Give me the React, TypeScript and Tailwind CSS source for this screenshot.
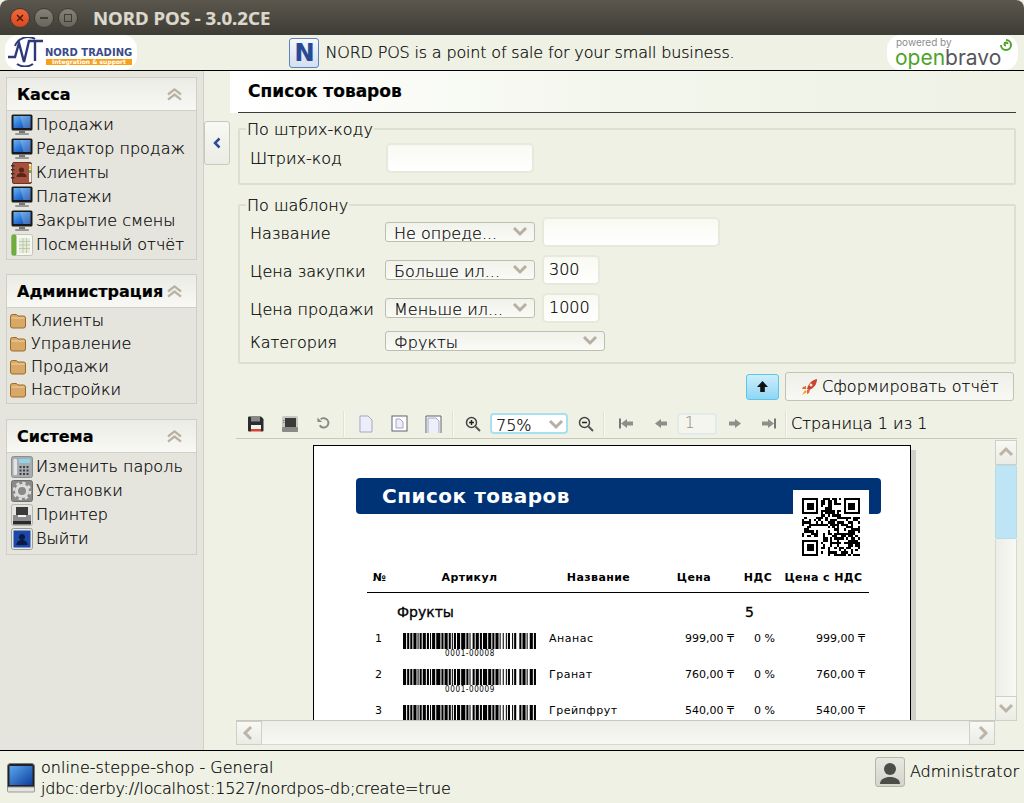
import type { ReactNode } from 'react';

const FONT = "font-['DejaVu_Sans',sans-serif]";

function Chevron({ dir = 'down', className = '' }: { dir?: 'up' | 'down' | 'left' | 'right'; className?: string }) {
  const points = {
    down: '2,4 8,10 14,4',
    up: '2,10 8,4 14,10',
    left: '10,2 4,8 10,14',
    right: '6,2 12,8 6,14',
  }[dir];
  return (
    <svg viewBox="0 0 16 16" className={className} fill="none">
      <polyline points={points} stroke="currentColor" strokeWidth="3" />
    </svg>
  );
}

function DoubleUp() {
  return (
    <svg viewBox="0 0 16 14" className="w-[15px] h-[13px] text-[#b9b2a3]" fill="none">
      <polyline points="1,7 8,1.5 15,7" stroke="currentColor" strokeWidth="2.4" />
      <polyline points="1,12.5 8,7 15,12.5" stroke="currentColor" strokeWidth="2.4" />
    </svg>
  );
}

function MonitorIcon() {
  return (
    <svg viewBox="0 0 22 22" className="w-[22px] h-[22px]">
      <defs>
        <linearGradient id="scr" x1="0" y1="0" x2="1" y2="1">
          <stop offset="0" stopColor="#6fb4ee" />
          <stop offset="0.5" stopColor="#2a76d8" />
          <stop offset="1" stopColor="#0d3f9c" />
        </linearGradient>
      </defs>
      <rect x="0.5" y="0.5" width="21" height="16" rx="1.5" fill="#1a1a1a" />
      <rect x="2.5" y="2" width="17" height="12" fill="url(#scr)" />
      <path d="M9 2h10.5v12h-7z" fill="#fff" opacity="0.22" />
      <rect x="8" y="16.5" width="6" height="2.5" fill="#777" />
      <rect x="4" y="19" width="14" height="2" rx="1" fill="#999" />
    </svg>
  );
}

function BookIcon() {
  return (
    <svg viewBox="0 0 22 22" className="w-[22px] h-[22px]">
      <rect x="1.5" y="0.5" width="19" height="21" rx="1.5" fill="#a4513d" stroke="#6f3324" />
      <rect x="18" y="2" width="2.5" height="18" fill="#eee" />
      <rect x="18" y="4" width="2.5" height="3" fill="#e3c23a" />
      <rect x="18" y="8" width="2.5" height="3" fill="#68b04a" />
      <rect x="0" y="3" width="3.5" height="1.5" fill="#333" />
      <rect x="0" y="7" width="3.5" height="1.5" fill="#333" />
      <rect x="0" y="11" width="3.5" height="1.5" fill="#333" />
      <rect x="0" y="15" width="3.5" height="1.5" fill="#333" />
      <circle cx="10.5" cy="8" r="2.6" fill="#5a2418" />
      <path d="M5.5 15c0-3 2.5-4 5-4s5 1 5 4z" fill="#5a2418" />
    </svg>
  );
}

function SheetIcon() {
  return (
    <svg viewBox="0 0 22 22" className="w-[22px] h-[22px]">
      <rect x="0.5" y="0.5" width="21" height="21" rx="2" fill="#f6f6f2" stroke="#c4c4bc" />
      <rect x="0.5" y="0.5" width="5" height="21" rx="2" fill="#6fae3c" />
      <path d="M8 4h11v15H8z" fill="#e2efd2" />
      <path d="M8 7.5h11M8 11h11M8 14.5h11M12 4v15M15.5 4v15" stroke="#bcbcb0" strokeWidth="0.8" />
    </svg>
  );
}

function FolderIcon() {
  return (
    <svg viewBox="0 0 16 16" className="w-[16px] h-[16px]">
      <path d="M.5 3.5q0-2 2-2h4l1.5 1.5h5.5q2 0 2 2v8q0 2-2 2h-11q-2 0-2-2z" fill="#d8a866" stroke="#9a6a2a" />
      <path d="M1.5 5h13" stroke="#f0d4a4" />
    </svg>
  );
}

function CalcIcon() {
  return (
    <svg viewBox="0 0 22 22" className="w-[22px] h-[22px]">
      <rect x="0.5" y="0.5" width="21" height="21" rx="2" fill="#a9adb1" stroke="#8b8e90" />
      <rect x="8" y="3" width="11" height="4" fill="#8fd4ea" />
      <rect x="2.5" y="3" width="3.5" height="16" rx="1" fill="#e2e4e6" />
      <path d="M8.5 10h2v2h-2zM12 10h2v2h-2zM15.500 10h2v2h-2zM8.500 13.500h2v2h-2zM12 13.500h2v2h-2zM15.500 13.500h2v2h-2zM8.500 17h2v2h-2zM12 17h2v2h-2zM15.500 17h2v2h-2z" fill="#3d4043" />
    </svg>
  );
}

function GearIcon() {
  return (
    <svg viewBox="0 0 22 22" className="w-[22px] h-[22px]">
      <rect x="0.5" y="0.5" width="21" height="21" rx="2" fill="#8a8a88" stroke="#6e6e6c" />
      <circle cx="11" cy="11" r="5.500" fill="none" stroke="#ddd" strokeWidth="3" />
      <circle cx="11" cy="11" r="8" fill="none" stroke="#ddd" strokeWidth="2.500" strokeDasharray="3.300 3" />
    </svg>
  );
}

function PrinterIcon() {
  return (
    <svg viewBox="0 0 22 22" className="w-[22px] h-[22px]">
      <rect x="0.5" y="0.5" width="21" height="21" rx="2" fill="#e4e4e0" stroke="#b5b5b0" />
      <rect x="5" y="3" width="12" height="8" fill="#3a3a3a" />
      <rect x="2" y="11" width="18" height="6" fill="#8a8b8c" />
      <rect x="2" y="17" width="18" height="3.500" fill="#2a2a2a" />
      <rect x="7" y="11" width="8" height="2" fill="#f4f4f4" />
    </svg>
  );
}

function ExitIcon() {
  return (
    <svg viewBox="0 0 22 22" className="w-[22px] h-[22px]">
      <rect x="0.5" y="0.5" width="21" height="21" rx="2" fill="#e8e8e4" stroke="#9a9a96" />
      <rect x="2.500" y="2.500" width="17" height="17" fill="#1d48a8" />
      <circle cx="11" cy="9" r="3" fill="#0a1c44" />
      <path d="M5.500 17c0-3.500 2.500-5 5.500-5s5.500 1.500 5.500 5z" fill="#0a1c44" />
    </svg>
  );
}

function SideRow({ icon, text, h, gap }: { icon: ReactNode; text: string; h: string; gap: string }) {
  return (
    <div className={`flex items-center ${h}`}>
      <span className={`shrink-0 flex items-center ${gap}`}>{icon}</span>
      <span className="text-[16px] text-black whitespace-nowrap">{text}</span>
    </div>
  );
}

function SideSection({ title, children, className = '' }: { title: string; children: ReactNode; className?: string }) {
  return (
    <section className={`mx-[6px] border border-[#cfcfc6] bg-[#e5e5de] ${className}`}>
      <div className="h-[33px] flex items-center justify-between pt-[1px] pl-[10px] pr-[14px] bg-gradient-to-b from-[#ecece6] to-[#f8f8f4] border-b border-[#cfcfc6]">
        <span className="text-[16px] font-bold text-black">{title}</span>
        <DoubleUp />
      </div>
      <div className="pl-[4px]">{children}</div>
    </section>
  );
}

function Sidebar() {
  const rowH = 'h-[24px]';
  const big = 'w-[25px]';
  return (
    <aside className="w-[204px] shrink-0 bg-[#e5e5de] border-r border-[#d0d0c6] pt-[6px]">
      <SideSection title="Касса">
        <div className="py-[2px]">
          <SideRow icon={<MonitorIcon />} text="Продажи" h={rowH} gap={big} />
          <SideRow icon={<MonitorIcon />} text="Редактор продаж" h={rowH} gap={big} />
          <SideRow icon={<BookIcon />} text="Клиенты" h={rowH} gap={big} />
          <SideRow icon={<MonitorIcon />} text="Платежи" h={rowH} gap={big} />
          <SideRow icon={<MonitorIcon />} text="Закрытие смены" h={rowH} gap={big} />
          <SideRow icon={<SheetIcon />} text="Посменный отчёт" h={rowH} gap={big} />
        </div>
      </SideSection>
      <SideSection title="Администрация" className="mt-[14px]">
        <div className="pt-[1px] pb-[2px] -ml-[1px]">
          <SideRow icon={<FolderIcon />} text="Клиенты" h="h-[23px]" gap="w-[21px]" />
          <SideRow icon={<FolderIcon />} text="Управление" h="h-[23px]" gap="w-[21px]" />
          <SideRow icon={<FolderIcon />} text="Продажи" h="h-[23px]" gap="w-[21px]" />
          <SideRow icon={<FolderIcon />} text="Настройки" h="h-[23px]" gap="w-[21px]" />
        </div>
      </SideSection>
      <SideSection title="Система" className="mt-[15px]">
        <div className="pt-[2px] pb-[3px]">
          <SideRow icon={<CalcIcon />} text="Изменить пароль" h={rowH} gap={big} />
          <SideRow icon={<GearIcon />} text="Установки" h={rowH} gap={big} />
          <SideRow icon={<PrinterIcon />} text="Принтер" h={rowH} gap={big} />
          <SideRow icon={<ExitIcon />} text="Выйти" h={rowH} gap={big} />
        </div>
      </SideSection>
    </aside>
  );
}

function TextField({ value, className }: { value?: string; className: string }) {
  return (
    <div className={`h-[30px] rounded-[5px] border-2 border-[#e6e9dc] bg-gradient-to-b from-[#f8faf2] to-white px-[5px] flex items-center text-[16px] text-black ${className}`}>
      {value}
    </div>
  );
}

function Select({ value, className }: { value: string; className: string }) {
  return (
    <div className={`h-[20px] rounded-[3px] border border-[#bdbdb0] bg-gradient-to-b from-[#f2f2ec] to-[#fafaf6] pl-[8px] pr-[6px] flex items-start justify-between overflow-hidden ${className}`}>
      <span className="text-[16px] leading-[21px] text-black whitespace-nowrap">{value}</span>
      <Chevron className="w-[16px] h-[16px] mt-[1px] text-[#b7b0a2]" />
    </div>
  );
}

function FormRow({ label, children, className, labelPad = 'pt-[3px]' }: { label: string; children: ReactNode; className?: string; labelPad?: string }) {
  return (
    <div className={`flex items-center ${className ?? ''}`}>
      <span className={`w-[138px] pl-[3px] text-[16px] text-black whitespace-nowrap ${labelPad}`}>{label}</span>
      {children}
    </div>
  );
}

function Group({ title, children, className = '' }: { title: string; children: ReactNode; className?: string }) {
  return (
    <fieldset className={`border-2 border-[#dcdfd2] rounded-[2px] px-[7px] ${className}`}>
      <legend className="-ml-[1px] px-[1px] text-[16px] leading-[18px] text-black">
        <span className="relative top-[1px]">{title}</span>
      </legend>
      {children}
    </fieldset>
  );
}

function Sep() {
  return <span className="w-[2px] h-[26px] bg-[#e0e2d6] border-r border-[#f8f9f3]" />;
}

function Page({ variant }: { variant: 0 | 1 | 2 }) {
  return (
    <svg viewBox="0 0 18 18" className="w-[18px] h-[18px]">
      {variant === 1 && <rect x="1" y="1" width="15" height="15" fill="#fff" stroke="#5e6070" />}
      {variant === 2 && <path d="M1 18V1h15v17" fill="#fff" stroke="#5e6070" />}
      <path d={variant === 1 ? 'M5 4h4l3 3v6H5z' : variant === 2 ? 'M3 18V3h8l3 3v12' : 'M3 1h8l4 4v12H3z'} fill="#eeeefa" stroke="#a5a5c5" />
    </svg>
  );
}

function NavArrow({ dir, bar }: { dir: 'l' | 'r'; bar?: boolean }) {
  const tri = dir === 'l' ? 'M8 3L2 7.500l6 4.500V9.500h6v-4H8z' : 'M8 3l6 4.500L8 12V9.500H2v-4h6z';
  return (
    <svg viewBox="0 0 16 15" className="w-[16px] h-[15px]">
      <path d={tri} fill="#8f8f8a" />
      {bar && <rect x={dir === 'l' ? 0 : 14} y="2.500" width="2" height="10" fill="#777" />}
    </svg>
  );
}

function Magnifier({ plus }: { plus?: boolean }) {
  return (
    <svg viewBox="0 0 16 16" className="w-[16px] h-[16px]" fill="none">
      <circle cx="6.500" cy="6.500" r="5" stroke="#444" strokeWidth="1.500" />
      <path d="M10.500 10.500L15 15" stroke="#555" strokeWidth="2" />
      <path d="M4 6.500h5" stroke="#222" strokeWidth="1.500" />
      {plus && <path d="M6.500 4v5" stroke="#222" strokeWidth="1.500" />}
    </svg>
  );
}

function Toolbar() {
  return (
    <div className="h-[27px] mt-[9px] flex items-center text-black">
      <span className="w-[18px] ml-[10px] flex">
        <svg viewBox="0 0 16 16" className="w-[16px] h-[16px]">
          <path d="M0 1.500q0-1 1-1h12l2.500 2.500v11.500q0 1-1 1H1q-1 0-1-1z" fill="#2c2c2c" />
          <rect x="3" y="0.500" width="9" height="5" fill="#888" />
          <rect x="3" y="9" width="10" height="7" fill="#f2f2f2" />
          <rect x="3" y="13" width="10" height="2.500" fill="#d8412c" />
        </svg>
      </span>
      <span className="ml-[16px] flex">
        <svg viewBox="0 0 16 16" className="w-[16px] h-[16px]">
          <rect x="0" y="0" width="16" height="16" rx="2" fill="#c8c8c2" />
          <rect x="3" y="2" width="11" height="9" fill="#3a3a3a" />
          <rect x="0" y="11" width="16" height="5" rx="1" fill="#8a8a86" />
          <rect x="1" y="4" width="1.500" height="1" fill="#e44" />
          <rect x="1" y="6" width="1.500" height="1" fill="#5a5" />
        </svg>
      </span>
      <span className="ml-[18px] flex">
        <svg viewBox="0 0 16 16" className="w-[15px] h-[15px]" fill="none">
          <path d="M4 10a5 5 0 1 0 1-6.500" stroke="#8a8a84" strokeWidth="2" />
          <path d="M1.500 1.500v5h5z" fill="#8a8a84" />
        </svg>
      </span>
      <span className="ml-[12px] flex"><Sep /></span>
      <span className="ml-[12px] flex"><Page variant={0} /></span>
      <span className="ml-[16px] flex"><Page variant={1} /></span>
      <span className="ml-[16px] flex"><Page variant={2} /></span>
      <span className="ml-[9px] flex"><Sep /></span>
      <span className="ml-[11px] flex"><Magnifier plus /></span>
      <div className="ml-[9px] w-[78px] h-[21px] rounded-[4px] border-2 border-[#aadff0] bg-white overflow-hidden flex items-start justify-between pl-[4px] pr-[2px]">
        <span className="text-[16px] leading-[22px]">75%</span>
        <Chevron className="w-[16px] h-[16px] mt-[2px] text-[#b7b0a2]" />
      </div>
      <span className="ml-[10px] flex"><Magnifier /></span>
      <span className="ml-[9px] flex"><Sep /></span>
      <span className="ml-[14px] flex"><NavArrow dir="l" bar /></span>
      <span className="ml-[18px] flex"><NavArrow dir="l" /></span>
      <div className="ml-[8px] w-[40px] h-[22px] rounded-[4px] border-2 border-[#e2eaea] bg-[#f4f6ee] pl-[6px] flex items-center text-[15px] text-[#9a9a94]">1</div>
      <span className="ml-[10px] flex"><NavArrow dir="r" /></span>
      <span className="ml-[17px] flex"><NavArrow dir="r" bar /></span>
      <span className="ml-[9px] flex"><Sep /></span>
      <span className="ml-[4px] text-[16px] whitespace-nowrap">Страница 1 из 1</span>
    </div>
  );
}

function hashBit(x: number, y: number) {
  const n = Math.sin(x * 12.9898 + y * 78.233) * 43758.5453;
  return n - Math.floor(n) > 0.5;
}

function QrCode() {
  const size = 25;
  const cells: ReactNode[] = [];
  const finder = (x: number, y: number) => {
    if (x > 6 || y > 6 || x < 0 || y < 0) return null;
    const r = Math.max(Math.abs(x - 3), Math.abs(y - 3));
    return r !== 2;
  };
  for (let y = 0; y < size; y++) {
    for (let x = 0; x < size; x++) {
      const f = finder(x, y) ?? finder(x - size + 7, y) ?? finder(x, y - size + 7);
      const inQuiet = (x < 8 && y < 8) || (x >= size - 8 && y < 8) || (x < 8 && y >= size - 8);
      const on = f !== null ? f : inQuiet ? false : hashBit(x, y);
      if (on) cells.push(<rect key={`${x}-${y}`} x={x} y={y} width="1.02" height="1.02" />);
    }
  }
  return (
    <svg viewBox="0 0 25 25" className="w-[58px] h-[58px]" fill="#000" shapeRendering="crispEdges">
      {cells}
    </svg>
  );
}

// black, white, black, white...
const BARS = [3, 1, 2, 1, 2, 1, 3, 1, 1, 1, 2, 1, 3, 1, 2, 1, 1, 1, 3, 1, 4, 1, 2, 1, 3, 1, 2, 1, 1, 1, 2, 1, 3, 1, 4, 1, 2, 1, 1, 2, 2, 1, 3, 1, 2, 1, 4, 1, 3, 1, 2, 1, 3, 1, 1, 2, 1, 2, 1, 1, 2, 2, 1, 1, 2, 3, 2, 1, 3, 1, 1, 2, 3, 1, 2, 1];

function Barcode({ code }: { code: string }) {
  let x = 0;
  const rects: ReactNode[] = [];
  BARS.forEach((w, i) => {
    if (i % 2 === 0) rects.push(<rect key={i} x={x} y="0" width={w} height="16" />);
    x += w;
  });
  return (
    <div className="w-[134px]">
      <svg viewBox={`0 0 ${x} 16`} preserveAspectRatio="none" className="w-[134px] h-[16px] block" fill="#000">
        {rects}
      </svg>
      <div className="text-[8px] leading-[9px] tracking-[0.6px] text-center text-black font-['DejaVu_Sans_Condensed','DejaVu_Sans',sans-serif]">{code}</div>
    </div>
  );
}

const rows = [
  { n: 1, code: '0001-00008', name: 'Ананас', price: '999,00 ₸' },
  { n: 2, code: '0001-00009', name: 'Гранат', price: '760,00 ₸' },
  { n: 3, code: '0001-00010', name: 'Грейпфрут', price: '540,00 ₸' },
];

function Report() {
  return (
    <div className="ml-[77px] mt-[6px] w-[598px] h-[400px] bg-white border border-black shadow-[5px_5px_0_#d0d0c8] font-normal [-webkit-text-stroke:0]">
      <div className="relative ml-[42px] mt-[32px] w-[525px] h-[36px] bg-[#003375] rounded-[4px] pl-[26px] flex items-center">
        <span className="text-[20px] font-bold tracking-[0.5px] text-white -mt-[1px]">Список товаров</span>
        <div className="absolute left-[437px] top-[12px] w-[76px] h-[68px] bg-white pl-[9px] pt-[8px]">
          <QrCode />
        </div>
      </div>
      <div className="ml-[53px] mt-[54px] w-[502px] text-black">
        <div className="flex h-[25px] pb-[3px] items-center border-b border-black text-[11px] font-bold tracking-[0.4px] text-center">
          <span className="w-[25px]">№</span>
          <span className="w-[155px]">Артикул</span>
          <span className="w-[103px]">Название</span>
          <span className="w-[88px]">Цена</span>
          <span className="w-[40px]">НДС</span>
          <span className="w-[91px] whitespace-nowrap">Цена с НДС</span>
        </div>
        <div className="flex h-[17px] mt-[11px] items-center text-[14px] [-webkit-text-stroke:0.3px_black]">
          <span className="w-[30px]" />
          <span className="w-[348px]">Фрукты</span>
          <span>5</span>
        </div>
        <div className="pt-[12px]">
          {rows.map((r) => (
            <div key={r.n} className="flex h-[36px] text-[11px] leading-[12px]">
              <span className="w-[25px] pl-[8px]">{r.n}</span>
              <span className="w-[155px] pl-[11px]"><Barcode code={r.code} /></span>
              <span className="w-[103px] pl-[2px] tracking-[0.5px]">{r.name}</span>
              <span className="w-[84px] text-right whitespace-nowrap">{r.price}</span>
              <span className="w-[41px] text-right whitespace-nowrap">0 %</span>
              <span className="w-[90px] text-right whitespace-nowrap">{r.price}</span>
            </div>
          ))}
        </div>
      </div>
    </div>
  );
}

function ScrollBtn({ dir, className }: { dir: 'up' | 'down' | 'left' | 'right'; className: string }) {
  return (
    <div className={`shrink-0 flex items-center justify-center bg-gradient-to-b from-[#f8f8f4] to-[#ecece6] border border-[#cfcfc6] ${className}`}>
      <Chevron dir={dir} className="w-[16px] h-[16px] text-[#bcb5a7]" />
    </div>
  );
}

function Preview() {
  return (
    <div className="mt-[1px] ml-[-2px] w-[781px] border-t border-[#c8c8bc] grid grid-cols-[759px_22px] grid-rows-[281px_25px]">
      <div className="overflow-hidden bg-[#eef1e4]">
        <Report />
      </div>
      <div className="flex flex-col mt-[1px] -mb-[1px]">
        <ScrollBtn dir="up" className="h-[25px]" />
        <div className="h-[74px] bg-[#bde5f5] border border-[#b9dbe5] rounded-[2px]" />
        <div className="flex-1 bg-gradient-to-r from-[#eeeee8] to-[#f8f8f4] border-x border-[#d8d8ce]" />
        <ScrollBtn dir="down" className="h-[25px]" />
      </div>
      <div className="flex border-t border-[#c8c8bc]">
        <ScrollBtn dir="left" className="w-[26px]" />
        <div className="flex-1 bg-gradient-to-b from-[#eeeee8] to-[#f8f8f4] border-b border-[#d8d8ce]" />
        <ScrollBtn dir="right" className="w-[26px]" />
      </div>
      <div />
    </div>
  );
}

function Header() {
  return (
    <header className="h-[35px] shrink-0 flex items-center justify-between bg-[#eef1e4]">
      <div className="w-[132px] h-[35px] ml-[5px] bg-white rounded-[14px] relative overflow-hidden [-webkit-text-stroke:0]">
        <svg viewBox="0 0 38 30" className="absolute left-[2px] top-[2px] w-[38px] h-[30px]" fill="none">
          <path d="M1 20h7l4-14 5 19 5-21h14" stroke="#2e3a78" strokeWidth="2.400" />
          <path d="M28 4v20" stroke="#2e3a78" strokeWidth="2.400" />
          <path d="M8 9a14 14 0 0 1 20-7" stroke="#2e3a78" strokeWidth="2" />
          <path d="M10 27a14 14 0 0 0 16 0" stroke="#2e3a78" strokeWidth="2" />
        </svg>
        <span className="absolute left-[40px] top-[12px] text-[10px] leading-[11px] font-bold text-[#3a4a8a] whitespace-nowrap">NORD TRADING</span>
        <span className="absolute left-[41px] top-[24px] w-[86px] h-[6px] bg-[#f7a11a] text-[6px] leading-[6px] text-center text-white font-bold whitespace-nowrap overflow-hidden">Integration &amp; support</span>
      </div>
      <div className="flex items-center">
        <div className="w-[30px] h-[30px] rounded-[3px] border border-[#5d83bb] bg-gradient-to-b from-[#f6f8fb] to-[#d5dfee] flex items-center justify-center text-[24px] font-bold leading-none text-[#274a96]">N</div>
        <span className="ml-[6px] text-[16px] tracking-[-0.17px] text-black whitespace-nowrap">NORD POS is a point of sale for your small business.</span>
      </div>
      <div className="w-[131px] h-[35px] mr-[6px] bg-white rounded-[14px] relative overflow-hidden font-['Inter',sans-serif] [-webkit-text-stroke:0]">
        <span className="absolute left-[9px] top-[2px] text-[10px] leading-[10px] font-normal text-[#8c8c8c] whitespace-nowrap">powered by</span>
        <span className="absolute left-[8px] top-[12px] text-[21px] leading-[22px] font-normal whitespace-nowrap"><span className="text-[#4fa32b]">open</span><span className="text-[#55565a]">bravo</span></span>
        <svg viewBox="0 0 12 12" className="absolute left-[113px] top-[4px] w-[12px] h-[12px]" fill="none">
          <path d="M6 6.500a1.500 1.500 0 1 1 1.500 -1.500M6 1a5 5 0 1 1-5 5" stroke="#4fa32b" strokeWidth="2" />
        </svg>
      </div>
    </header>
  );
}

function Content() {
  return (
    <div className="flex-1 min-w-0 flex flex-col">
      <div className="h-[42px] shrink-0 bg-gradient-to-r from-white via-[#f3f6ec] to-[#eef1e4]">
        <div className="ml-[8px] mr-[8px] h-[42px] pl-[10px] flex items-center border-b border-[#3c3c3c]">
          <span className="text-[17px] font-bold text-black">Список товаров</span>
        </div>
      </div>
      <div className="px-[8px]">
        <Group title="По штрих-коду" className="mt-[7px] pb-[10px]">
          <FormRow label="Штрих-код" className="mt-[5px]" labelPad="pt-[1px]">
            <TextField className="w-[148px] ml-[1px]" />
          </FormRow>
        </Group>
        <Group title="По шаблону" className="mt-[11px] pb-[11px]">
          <FormRow label="Название" className="mt-[3px]">
            <Select value="Не опреде..." className="w-[150px]" />
            <TextField className="w-[178px] ml-[7px]" />
          </FormRow>
          <FormRow label="Цена закупки" className="mt-[8px]">
            <Select value="Больше ил..." className="w-[150px]" />
            <TextField value="300" className="w-[58px] ml-[7px]" />
          </FormRow>
          <FormRow label="Цена продажи" className="mt-[8px]">
            <Select value="Меньше ил..." className="w-[150px]" />
            <TextField value="1000" className="w-[58px] ml-[7px]" />
          </FormRow>
          <FormRow label="Категория" className="mt-[8px] h-[20px]">
            <Select value="Фрукты" className="w-[220px]" />
          </FormRow>
        </Group>
        <div className="flex justify-end items-center mt-[8px] gap-[6px] pr-[2px]">
          <button className="w-[33px] h-[26px] rounded-[3px] border border-[#58c6ee] bg-gradient-to-b from-[#cdeefb] to-[#8fd6f4] flex items-center justify-center">
            <svg viewBox="0 0 12 12" className="w-[11px] h-[11px]"><path d="M6 0l6 6.500H8.500V12h-5V6.500H0z" fill="#111" /></svg>
          </button>
          <button className="w-[229px] h-[29px] rounded-[3px] border border-[#c2c2b6] bg-gradient-to-b from-[#f0f0ea] to-[#f8f8f4] flex items-center pl-[14px] text-[16px] text-black">
            <svg viewBox="0 0 18 18" className="w-[18px] h-[18px] mr-[4px]">
              <path d="M7 11C8 6 12 2 17 1c0 5-3 9-8 11z" fill="#c9442a" />
              <path d="M11 5.500a1.500 1.500 0 1 0 .01 0" fill="#f4e3c8" />
              <path d="M6 8L3 9l-1 2 4 0zM10 12l-1 3-2 1 0-4z" fill="#d96a3a" />
              <path d="M5 12l2 2-5 3z" fill="#f2a324" />
            </svg>
            Сформировать отчёт
          </button>
        </div>
        <Toolbar />
        <Preview />
      </div>
    </div>
  );
}

export default function App() {
  return (
    <div className={`w-[1024px] h-[803px] overflow-hidden flex flex-col bg-[#eef1e4] font-extralight [-webkit-text-stroke:0.2px] ${FONT}`}>
      <div className="h-[35px] shrink-0 rounded-t-[8px] bg-gradient-to-b from-[#5b574d] to-[#3e3c36] flex items-center pl-[10px]">
        <span className="w-[20px] h-[20px] rounded-full border border-[#3e3c36] bg-gradient-to-b from-[#f0693a] to-[#d9461e] flex items-center justify-center text-[#4a1b0a]">
          <svg viewBox="0 0 8 8" className="w-[8px] h-[8px]"><path d="M1 1l6 6M7 1L1 7" stroke="currentColor" strokeWidth="1.500" /></svg>
        </span>
        <span className="ml-[4px] w-[20px] h-[20px] rounded-full border border-[#3e3c36] bg-gradient-to-b from-[#858176] to-[#67645a] flex items-center justify-center">
          <span className="w-[8px] h-[2px] bg-[#3e3c36]" />
        </span>
        <span className="ml-[4px] w-[20px] h-[20px] rounded-full border border-[#3e3c36] bg-gradient-to-b from-[#858176] to-[#67645a] flex items-center justify-center">
          <span className="w-[8px] h-[8px] border border-[#3e3c36]" />
        </span>
        <span className="ml-[15px] text-[18.6px] font-bold text-[#dcd8cc] whitespace-nowrap font-['Noto_Sans',sans-serif]">NORD POS - 3.0.2CE</span>
      </div>
      <Header />
      <div className="h-[1px] shrink-0 bg-black" />
      <div className="flex flex-1 min-h-0">
        <Sidebar />
        <div className="w-[26px] shrink-0 pt-[50px]">
          <div className="w-[26px] h-[44px] rounded-[3px] border border-[#c8c8be] bg-gradient-to-b from-[#f8f8f4] to-[#ecece6] flex items-center justify-center">
            <svg viewBox="0 0 8 12" className="w-[8px] h-[12px]" fill="none"><polyline points="6.500,1.500 2,6 6.500,10.500" stroke="#2e4a9a" strokeWidth="2.500" /></svg>
          </div>
        </div>
        <Content />
      </div>
      <div className="h-[1px] shrink-0 bg-black" />
      <footer className="h-[52px] shrink-0 flex items-start justify-between text-[16px] text-black">
        <div className="flex">
          <svg viewBox="0 0 28 30" className="ml-[7px] mt-[12px] w-[28px] h-[30px]">
            <defs>
              <linearGradient id="scr2" x1="0" y1="0" x2="1" y2="1">
                <stop offset="0" stopColor="#5aa6ee" />
                <stop offset="1" stopColor="#0d3f9c" />
              </linearGradient>
            </defs>
            <rect x="0.500" y="0.500" width="27" height="28" rx="3" fill="#222" stroke="#777" />
            <rect x="2.500" y="3" width="23" height="19" fill="url(#scr2)" />
            <rect x="0.500" y="24" width="27" height="5" rx="1" fill="#e4e4e0" stroke="#999" />
          </svg>
          <div className="ml-[6px] pt-[6px] leading-[21px] whitespace-nowrap">
            <div>online-steppe-shop - General</div>
            <div className="tracking-[-0.14px]">jdbc:derby://localhost:1527/nordpos-db;create=true</div>
          </div>
        </div>
        <div className="flex items-center mt-[6px] mr-[5px]">
          <div className="w-[30px] h-[30px] rounded-[3px] border border-[#b5b5ab] bg-gradient-to-b from-[#e8e8e2] to-[#d4d4cc] flex items-center justify-center overflow-hidden">
            <svg viewBox="0 0 24 24" className="w-[24px] h-[24px]"><circle cx="12" cy="9" r="6" fill="#4c4c48" /><path d="M2 24c0-5 5-7 10-7s10 2 10 7z" fill="#4c4c48" /></svg>
          </div>
          <span className="ml-[5px]">Administrator</span>
        </div>
      </footer>
    </div>
  );
}
